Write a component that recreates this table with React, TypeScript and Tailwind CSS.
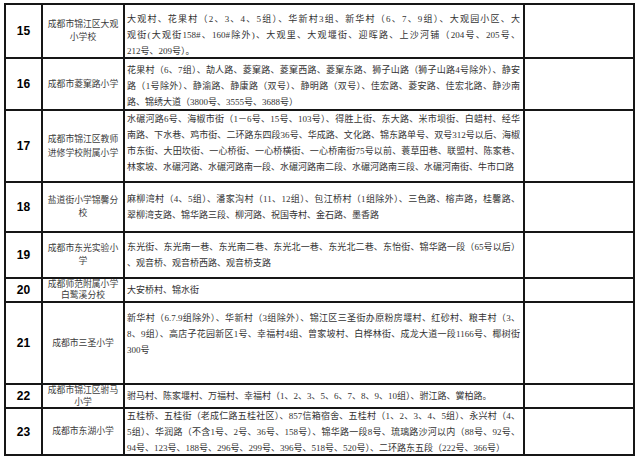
import { Fragment } from "react";

interface Row {
  no: string;
  school: string[];
  schoolAlign: string;
  areas: string[];
  areaAlign: string;
}

const rows: Row[] = [
  {
    no: "15",
    school: ["成都市锦江区大观", "小学校"],
    schoolAlign: "justify-center leading-[13px]",
    areas: [
      "大观村、花果村（2、3、4、5组）、华新村3组、新华村（6、7、9组）、大观园小区、大",
      "观街(大观街158#、160#除外)、大观里、大观堰街、迎晖路、上沙河铺（204号、205号、",
      "212号、209号）。",
    ],
    areaAlign: "justify-start pt-[6px]",
  },
  {
    no: "16",
    school: ["成都市菱窠路小学"],
    schoolAlign: "justify-center leading-[13px]",
    areas: [
      "花果村（6、7组）、劼人路、菱窠路、菱窠西路、菱窠东路、狮子山路（狮子山路4号除外）、静安",
      "路（1号除外）、静渝路、静康路（双号）、静明路（双号）、佳宏路、菱安路、佳宏北路、静沙南",
      "路、锦绣大道（3800号、3555号、3688号）",
    ],
    areaAlign: "justify-start pt-[3px]",
  },
  {
    no: "17",
    school: ["成都市锦江区教师", "进修学校附属小学"],
    schoolAlign: "justify-center leading-[14px]",
    areas: [
      "水碾河路6号、海椒市街（1－6号、15号、103号）、得胜上街、东大路、米市坝街、白蜡村、经华",
      "南路、下水巷、鸡市街、二环路东四段36号、华成路、文化路、锦东路单号、双号312号以后、海椒",
      "市东街、大田坎街、一心桥街、一心桥横街、一心桥南街75号以前、蓑草田巷、联盟村、陈家巷、",
      "林家坡、水碾河路、水碾河路南一段、水碾河路南二段、水碾河路南三段、水碾河南街、牛市口路",
    ],
    areaAlign: "justify-start pt-0",
  },
  {
    no: "18",
    school: ["盐道街小学锦馨分", "校"],
    schoolAlign: "justify-center leading-[13px]",
    areas: [
      "麻柳湾村（4、5组）、潘家沟村（11、12组）、包江桥村（1组除外）、三色路、榕声路，桂馨路、",
      "翠柳湾支路、锦华路三段、柳河路、祝国寺村、金石路、墨香路",
    ],
    areaAlign: "justify-center",
  },
  {
    no: "19",
    school: ["成都市东光实验小", "学"],
    schoolAlign: "justify-center leading-[13px]",
    areas: [
      "东光街、东光南一巷、东光南二巷、东光北一巷、东光北二巷、东怡街、锦华路一段（65号以后）",
      "、观音桥、观音桥西路、观音桥支路",
    ],
    areaAlign: "justify-center",
  },
  {
    no: "20",
    school: ["成都师范附属小学", "白鹭溪分校"],
    schoolAlign: "justify-start leading-[11px]",
    areas: ["大安桥村、锦水街"],
    areaAlign: "justify-center",
  },
  {
    no: "21",
    school: ["成都市三圣小学"],
    schoolAlign: "justify-center leading-[13px]",
    areas: [
      "新华村（6.7.9组除外）、华新村（3组除外）、锦江区三圣街办原粉房堰村、红砂村、粮丰村（3、",
      "8、9组）、高店子花园新区1号、幸福村4组、曾家坡村、白桦林街、成龙大道一段1166号、椰树街",
      "300号",
    ],
    areaAlign: "justify-start pt-[7px]",
  },
  {
    no: "22",
    school: ["成都市锦江区驸马", "小学"],
    schoolAlign: "justify-center leading-[12px]",
    areas: ["驸马村、陈家堰村、万福村、幸福村（1、2、3、5、6、7、8、9、10组）、驸江路、黉柏路。"],
    areaAlign: "justify-center",
  },
  {
    no: "23",
    school: ["成都市东湖小学"],
    schoolAlign: "justify-center leading-[13px]",
    areas: [
      "五桂桥、五桂街（老成仁路五桂社区）、857信箱宿舍、五桂村（1、2、3、4、5组）、永兴村（4、",
      "5组）、华润路（不含1号、2号、36号、158号）、锦华路一段8号、琉璃路沙河以内（88号、92号、",
      "94号、123号、188号、296号、299号、396号、518号、520号）、二环路东五段（222号、366号）",
    ],
    areaAlign: "justify-center",
  },
];

const App = () => {
  return (
    <div className="w-[640px] h-[458px] bg-white pt-[3px] pl-[4px] overflow-hidden">
      <div className="grid w-fit grid-cols-[35px_80px_398px_108px] grid-rows-[52px_50px_70px_48px_44px_22px_80px_22px_45px] gap-[2px] bg-[#161616] p-[2px] font-['Liberation_Serif','Noto_Sans_CJK_SC',serif]">
        {rows.map((row) => (
          <Fragment key={row.no}>
            {/* number */}
            <div className="bg-white flex items-center justify-center font-['Liberation_Sans',sans-serif] font-bold text-[12px] text-black">
              {row.no}
            </div>

            {/* school name */}
            <div className={`bg-white flex flex-col items-center text-center text-[8.8px] text-[#3c3c3c] ${row.schoolAlign}`}>
              {row.school.map((s) => (
                <div key={s}>{s}</div>
              ))}
            </div>

            {/* area */}
            <div className={`bg-white flex flex-col pl-[2px] pr-[3px] text-[9px] leading-[16px] text-[#333] ${row.areaAlign}`}>
              {row.areas.map((line, i) => (
                <div
                  key={i}
                  className={
                    i < row.areas.length - 1
                      ? "whitespace-nowrap text-justify [text-align-last:justify]"
                      : "whitespace-nowrap"
                  }
                >
                  {line}
                </div>
              ))}
            </div>

            {/* remarks, left empty */}
            <div className="bg-white" />
          </Fragment>
        ))}
      </div>
    </div>
  );
};

export default App;
